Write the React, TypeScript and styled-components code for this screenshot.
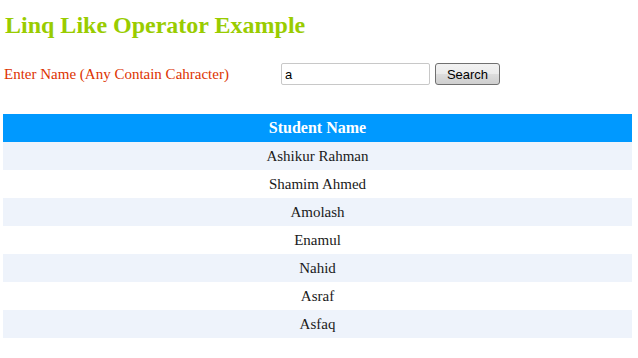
import React from "react";
import styled, { createGlobalStyle } from "styled-components";

const Global = createGlobalStyle`
  html, body { margin: 0; padding: 0; background: #fff; }
  body { font-family: "Liberation Serif", "Times New Roman", serif; }
`;

const Page = styled.div`
  padding: 0 6px 0 3px;
`;

const Title = styled.h1`
  margin: 0;
  padding: 11px 0 0 2px;
  font-size: 24px;
  line-height: 28px;
  font-weight: bold;
  color: #99cc00;
`;

const SearchRow = styled.div`
  display: flex;
  align-items: center;
  margin-top: 24px;
  height: 22px;
`;

const Label = styled.span`
  width: 277px;
  padding-left: 1px;
  font-size: 15px;
  color: #dd3300;
`;

const Input = styled.input`
  box-sizing: border-box;
  width: 149px;
  height: 22px;
  padding: 1px 3px;
  border: 1px solid #c8c8c8;
  border-radius: 2px;
  font-family: "Liberation Sans", Arial, sans-serif;
  font-size: 13px;
  color: #000;
  outline: none;
`;

const Button = styled.button`
  box-sizing: border-box;
  margin-left: 5px;
  width: 65px;
  height: 22px;
  padding: 0;
  border: 1px solid #707070;
  border-radius: 3px;
  background: linear-gradient(#f2f2f2 0%, #ebebeb 50%, #dddddd 50%, #cfcfcf 100%);
  font-family: "Liberation Sans", Arial, sans-serif;
  font-size: 13px;
  color: #000;
`;

const Table = styled.table`
  margin-top: 29px;
  width: 100%;
  border-collapse: collapse;
`;

const Th = styled.th`
  height: 28px;
  padding: 0;
  background: #0099ff;
  color: #fff;
  font-size: 16px;
  font-weight: bold;
  text-align: center;
`;

const Td = styled.td<{ $alt: boolean }>`
  height: 28px;
  padding: 0;
  background: ${(p) => (p.$alt ? "#eef3fb" : "#ffffff")};
  color: #1a1a1a;
  font-size: 15px;
  text-align: center;
`;

const names = ["Ashikur Rahman", "Shamim Ahmed", "Amolash", "Enamul", "Nahid", "Asraf", "Asfaq"];

export default function App() {
  return (
    <Page>
      <Global />
      <Title>Linq Like Operator Example</Title>
      <SearchRow>
        <Label>Enter Name (Any Contain Cahracter)</Label>
        <Input defaultValue="a" />
        <Button>Search</Button>
      </SearchRow>
      <Table>
        <thead>
          <tr>
            <Th>Student Name</Th>
          </tr>
        </thead>
        <tbody>
          {names.map((n, i) => (
            <tr key={n}>
              <Td $alt={i % 2 === 0}>{n}</Td>
            </tr>
          ))}
        </tbody>
      </Table>
    </Page>
  );
}
